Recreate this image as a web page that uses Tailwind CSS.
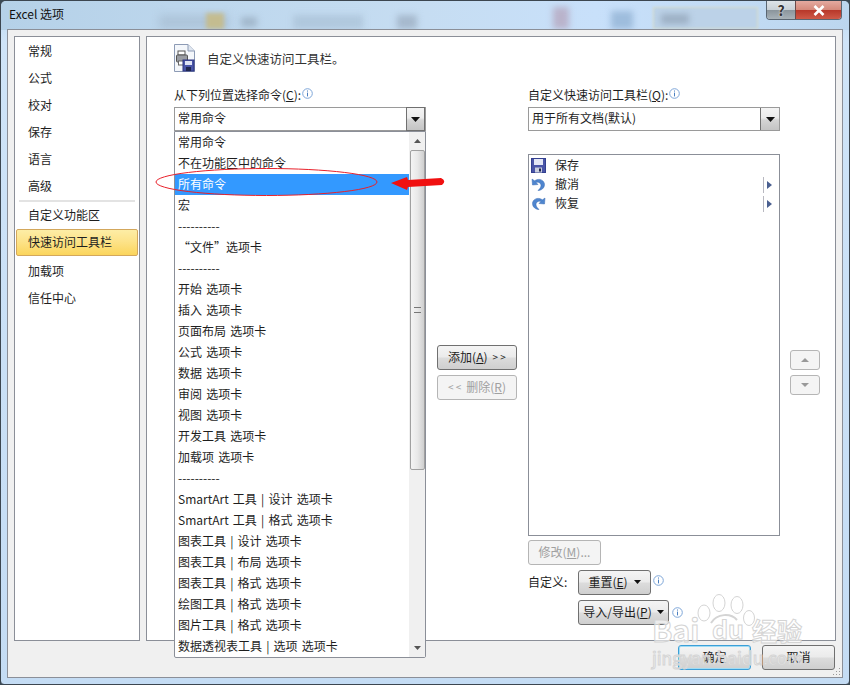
<!doctype html>
<html>

<head>
  <meta charset="UTF-8">
  <script src="https://cdn.jsdelivr.net/npm/@tailwindcss/browser@4"></script>
</head>

<body class="bg-[#3b4a55]">
  <div class="relative w-[850px] h-[685px] overflow-hidden rounded-t-[6px] rounded-b-[4px] border border-[#3c4650] bg-[linear-gradient(180deg,#bcd8f0_0%,#cfe4f8_6%,#c4dcf4_100%)] font-['Noto_Sans_CJK_SC',sans-serif] text-[12px] text-[#1e1e1e]">

    <!-- blurred window behind the glass -->
    <div class="absolute left-0 top-0 w-[850px] h-[29px] bg-[linear-gradient(90deg,#b5d1e8_0%,#c6ddf2_50%,#c8e0fa_70%,#bcd6ee_100%)]"></div>
    <div class="absolute left-[158px] top-[14px] w-[70px] h-[14px] bg-[#9fb4c8]/50 blur-[4px]"></div>
    <div class="absolute left-[205px] top-[12px] w-[18px] h-[16px] bg-[#c4bc90] blur-[2px]"></div>
    <div class="absolute left-[240px] top-[16px] w-[16px] h-[10px] bg-[#95aabd]/70 blur-[3px]"></div>
    <div class="absolute left-[292px] top-[14px] w-[70px] h-[14px] bg-[#a5bcd2]/60 blur-[3px]"></div>
    <div class="absolute left-[396px] top-[14px] w-[20px] h-[14px] bg-[#98aabd]/70 blur-[3px]"></div>
    <div class="absolute left-[552px] top-[6px] w-[16px] h-[22px] bg-[#b4a0b8]/70 blur-[3px]"></div>
    <div class="absolute left-[610px] top-[10px] w-[22px] h-[18px] bg-[#93b4d6]/80 blur-[3px]"></div>
    <div class="absolute left-[652px] top-[6px] w-[105px] h-[22px] border border-[#d8dcc4] bg-[#bcd2e8] blur-[1px]"></div>
    <div class="absolute left-[660px] top-[13px] w-[28px] h-[10px] bg-[#95a8bc]/80 blur-[3px]"></div>

    <!-- title bar -->
    <div class="relative flex h-[28px] items-start">
      <div class="pl-[8px] pt-[4px] text-[12px] leading-[18px] text-[#111]">Excel 选项</div>
      <div class="ml-auto mr-[7px] flex h-[19px] overflow-hidden rounded-b-[4px] border border-t-0 border-[#5a6672]">
        <div class="flex w-[28px] items-center justify-center bg-[linear-gradient(180deg,#dde3e8_0%,#c8d0d6_50%,#8b959c_52%,#a8b2b8_100%)] text-[14px] font-bold leading-none text-[#333] [text-shadow:0_0_2px_#fff]">?</div>
        <div class="flex w-[46px] items-center justify-center border-l border-[#6a4a4a] bg-[linear-gradient(180deg,#e4aaa0_0%,#d58a7c_48%,#b8382a_52%,#cf5a48_100%)]">
          <svg width="12" height="11" viewBox="0 0 12 11"><path d="M1.5 1 L10.5 10 M10.5 1 L1.5 10" stroke="#fff" stroke-width="2.6" /></svg>
        </div>
      </div>
    </div>

    <!-- dialog body -->
    <div class="relative ml-[6px] h-[649px] w-[836px] border border-[#8b8f98] bg-[#f0f0f0] pl-[6px] pt-[6px]">
      <div class="flex gap-[6px]">

        <!-- sidebar -->
        <div class="h-[605px] w-[126px] border border-[#8b8f98] bg-white pl-[1px] pt-[1px]">
          <div class="h-[27px] pl-[12px] leading-[25px]">常规</div>
          <div class="h-[27px] pl-[12px] leading-[25px]">公式</div>
          <div class="h-[27px] pl-[12px] leading-[25px]">校对</div>
          <div class="h-[27px] pl-[12px] leading-[25px]">保存</div>
          <div class="h-[27px] pl-[12px] leading-[25px]">语言</div>
          <div class="h-[27px] pl-[12px] leading-[25px]">高级</div>
          <div class="ml-[3px] mr-[4px] h-[2px] bg-[#e3e3e3]"></div>
          <div class="h-[27px] pl-[12px] leading-[25px]">自定义功能区</div>
          <div class="mb-[2px] h-[27px] w-[122px] rounded-[2px] border border-[#d3a75c] bg-[linear-gradient(180deg,#fdeda6_0%,#fde38a_45%,#fbd55c_100%)] pl-[11px] leading-[23px]">快速访问工具栏</div>
          <div class="h-[27px] pl-[12px] leading-[25px]">加载项</div>
          <div class="h-[27px] pl-[12px] leading-[25px]">信任中心</div>
        </div>

        <!-- main panel -->
        <div class="h-[605px] w-[690px] border border-[#8b8f98] bg-white">
          <div class="ml-[26px] mt-[6px] flex h-[30px] items-center gap-[11px]">
            <svg width="23" height="30" viewBox="0 0 23 30">
              <path d="M1.5 1.5 H15 L21.5 8 V28.5 H1.5 Z" fill="#f4f7fb" stroke="#8d9bb5" />
              <path d="M15 1.5 V8 H21.5" fill="#dfe6f0" stroke="#8d9bb5" />
              <rect x="5" y="8" width="7" height="4" fill="#fff" stroke="#555" />
              <rect x="3.500" y="12" width="11" height="7" rx="1" fill="#9a9da3" stroke="#555" />
              <rect x="5.500" y="18" width="6" height="4" fill="#fff" stroke="#666" />
              <rect x="10" y="17" width="11" height="11" fill="#4a55a8" stroke="#2d3580" />
              <rect x="12" y="18" width="7" height="4" fill="#dfe3f5" />
              <rect x="13" y="24" width="5" height="4" fill="#20264f" />
            </svg>
            <span class="pt-[3px] text-[12.5px] text-[#333]">自定义快速访问工具栏。</span>
          </div>

          <div class="ml-[27px] mt-[14px] flex">

            <!-- left column -->
            <div class="w-[252px]">
              <div class="flex h-[20px] items-start leading-[15px]">从下列位置选择命令(<span class="underline">C</span>):
                <svg class="ml-[1px] mt-[1px]" width="11" height="11" viewBox="0 0 11 11">
                  <circle cx="5.500" cy="5.500" r="4.800" fill="#fff" stroke="#7ea6d8" />
                  <path d="M5.500 2.500 V3.600 M5.500 4.600 V8.400" stroke="#4a7fc0" />
                </svg>
              </div>
              <div class="relative flex h-[24px] w-[252px] items-center justify-between border border-[#9a9a9a] bg-white pl-[3px]">
                <span class="pb-[2px]">常用命令</span>
                <div class="flex h-[24px] w-[19px] items-center justify-center border border-[#707070] bg-[linear-gradient(180deg,#f4f4f4_0%,#ebebeb_45%,#d4d4d4_55%,#c4c4c4_100%)]">
                  <svg width="9" height="5" viewBox="0 0 9 5"><path d="M0 0 H9 L4.500 5 Z" fill="#111" /></svg>
                </div>

                <!-- opened dropdown list -->
                <div class="absolute left-[-1px] top-[23px] z-10 flex h-[527px] w-[252px] rounded-b-[2px] border border-[#8b8f98] bg-white">
                  <div class="w-[235px] leading-[19px] [word-spacing:1.5px] [&>div]:pb-[2px]">
                    <div class="pl-[3px]">常用命令</div>
                    <div class="pl-[3px]">不在功能区中的命令</div>
                    <div class="bg-[#3399ff] pl-[3px] text-white">所有命令</div>
                    <div class="pl-[3px]">宏</div>
                    <div class="pl-[3px]">----------</div>
                    <div class="pl-[3px]">“文件”选项卡</div>
                    <div class="pl-[3px]">----------</div>
                    <div class="pl-[3px]">开始 选项卡</div>
                    <div class="pl-[3px]">插入 选项卡</div>
                    <div class="pl-[3px]">页面布局 选项卡</div>
                    <div class="pl-[3px]">公式 选项卡</div>
                    <div class="pl-[3px]">数据 选项卡</div>
                    <div class="pl-[3px]">审阅 选项卡</div>
                    <div class="pl-[3px]">视图 选项卡</div>
                    <div class="pl-[3px]">开发工具 选项卡</div>
                    <div class="pl-[3px]">加载项 选项卡</div>
                    <div class="pl-[3px]">----------</div>
                    <div class="pl-[3px]">SmartArt 工具 | 设计 选项卡</div>
                    <div class="pl-[3px]">SmartArt 工具 | 格式 选项卡</div>
                    <div class="pl-[3px]">图表工具 | 设计 选项卡</div>
                    <div class="pl-[3px]">图表工具 | 布局 选项卡</div>
                    <div class="pl-[3px]">图表工具 | 格式 选项卡</div>
                    <div class="pl-[3px]">绘图工具 | 格式 选项卡</div>
                    <div class="pl-[3px]">图片工具 | 格式 选项卡</div>
                    <div class="pl-[3px]">数据透视表工具 | 选项 选项卡</div>
                  </div>
                  <!-- scrollbar -->
                  <div class="flex w-[16px] flex-col items-center bg-[#f0f0f0]">
                    <div class="flex h-[18px] items-center justify-center">
                      <svg width="7" height="4" viewBox="0 0 7 4"><path d="M0 4 H7 L3.500 0 Z" fill="#555" /></svg>
                    </div>
                    <div class="flex h-[320px] w-[15px] items-center justify-center rounded-[2px] border border-[#a0a0a0] bg-[linear-gradient(90deg,#f4f4f4_0%,#e8e8e8_50%,#cfcfcf_100%)]">
                      <div class="h-[6px] w-[7px] border-y border-[#777] bg-[linear-gradient(180deg,transparent_40%,#777_40%,#777_60%,transparent_60%)]"></div>
                    </div>
                    <div class="mt-auto flex h-[18px] items-center justify-center">
                      <svg width="7" height="4" viewBox="0 0 7 4"><path d="M0 0 H7 L3.500 4 Z" fill="#555" /></svg>
                    </div>
                  </div>
                </div>
              </div>
            </div>

            <!-- add / remove buttons -->
            <div class="w-[102px] pl-[11px] pt-[258px]">
              <div class="flex h-[25px] w-[80px] items-center justify-center gap-[5px] rounded-[3px] border border-[#707070] bg-[linear-gradient(180deg,#f4f4f4_0%,#ebebeb_48%,#dcdcdc_52%,#cfcfcf_100%)] pb-[2px]"><span>添加(<span class="underline">A</span>)</span><span class="text-[10px]">&gt; &gt;</span></div>
              <div class="mt-[5px] flex h-[25px] w-[80px] items-center justify-center gap-[5px] rounded-[3px] border border-[#b5b5b5] bg-[#f4f4f4] pb-[2px] text-[#a0a0a0]"><span class="text-[10px]">&lt; &lt;</span><span>删除(<span class="underline">R</span>)</span></div>
            </div>

            <!-- right column -->
            <div class="w-[252px]">
              <div class="flex h-[20px] items-start leading-[15px]">自定义快速访问工具栏(<span class="underline">Q</span>):
                <svg class="ml-[1px] mt-[1px]" width="11" height="11" viewBox="0 0 11 11">
                  <circle cx="5.500" cy="5.500" r="4.800" fill="#fff" stroke="#7ea6d8" />
                  <path d="M5.500 2.500 V3.600 M5.500 4.600 V8.400" stroke="#4a7fc0" />
                </svg>
              </div>
              <div class="flex h-[24px] items-center justify-between border border-[#9a9a9a] bg-white pl-[3px]">
                <span class="pb-[2px]">用于所有文档(默认)</span>
                <div class="flex h-[22px] w-[19px] items-center justify-center border-l border-[#707070] bg-[linear-gradient(180deg,#f4f4f4_0%,#ebebeb_45%,#d4d4d4_55%,#c4c4c4_100%)]">
                  <svg width="9" height="5" viewBox="0 0 9 5"><path d="M0 0 H9 L4.500 5 Z" fill="#111" /></svg>
                </div>
              </div>

              <div class="mt-[23px] h-[382px] border border-[#8b8f98] bg-white pt-[1px] leading-[19px]">
                <div class="flex h-[19px] items-center">
                  <svg class="ml-[2px]" width="15" height="15" viewBox="0 0 15 15">
                    <rect x=".5" y=".5" width="14" height="14" fill="#4a55a8" stroke="#33408f" />
                    <rect x="3" y="1" width="9" height="6" fill="#e4e7f6" />
                    <rect x="4" y="9.500" width="7" height="5" fill="#c9cede" />
                    <rect x="8" y="10.500" width="2" height="3" fill="#20264f" />
                  </svg>
                  <span class="ml-[9px] pb-[2px]">保存</span>
                </div>
                <div class="flex h-[19px] items-center">
                  <svg class="ml-[2px]" width="15" height="15" viewBox="0 0 15 15">
                    <path d="M1 2 L1.500 8 L7 7.500 L5 5.500 C7.500 4.500 10 6 10 8.500 C10 10.500 8.500 12 7 13.500 C10.500 13.500 13.500 11 13.500 7.500 C13.500 3.500 8.500 0.500 3.500 3.800 Z" fill="#4f86cf" stroke="#3b6db5" stroke-width=".5" />
                  </svg>
                  <span class="ml-[9px] pb-[2px]">撤消</span>
                  <div class="ml-auto mr-[7px] flex h-[16px] items-center border-l border-[#b8b8c0] pl-[3px]">
                    <svg width="5" height="8" viewBox="0 0 5 8"><path d="M0 0 L5 4 L0 8 Z" fill="#4a5f90" /></svg>
                  </div>
                </div>
                <div class="flex h-[19px] items-center">
                  <svg class="ml-[2px]" width="15" height="15" viewBox="0 0 15 15">
                    <path d="M14 2 L13.500 8 L8 7.500 L10 5.500 C7.500 4.500 5 6 5 8.500 C5 10.500 6.500 12 8 13.500 C4.500 13.500 1.500 11 1.500 7.500 C1.500 3.500 6.500 0.500 11.500 3.800 Z" fill="#4f86cf" stroke="#3b6db5" stroke-width=".5" />
                  </svg>
                  <span class="ml-[9px] pb-[2px]">恢复</span>
                  <div class="ml-auto mr-[7px] flex h-[16px] items-center border-l border-[#b8b8c0] pl-[3px]">
                    <svg width="5" height="8" viewBox="0 0 5 8"><path d="M0 0 L5 4 L0 8 Z" fill="#4a5f90" /></svg>
                  </div>
                </div>
              </div>

              <div class="mt-[4px] flex h-[25px] w-[73px] items-center justify-center rounded-[3px] border border-[#b5b5b5] bg-[#f4f4f4] pb-[2px] text-[#a0a0a0]"><span>修改(<span class="underline">M</span>)...</span></div>

              <div class="mt-[5px] flex h-[25px] items-center">
                <span class="w-[50px] pb-[2px]">自定义:</span>
                <div class="flex h-[25px] w-[73px] items-center justify-center gap-[6px] rounded-[3px] border border-[#707070] bg-[linear-gradient(180deg,#f4f4f4_0%,#ebebeb_48%,#dcdcdc_52%,#cfcfcf_100%)] pb-[2px]">
                  <span>重置(<span class="underline">E</span>)</span>
                  <svg width="7" height="4" viewBox="0 0 7 4"><path d="M0 0 H7 L3.500 4 Z" fill="#111" /></svg>
                </div>
                <svg class="mb-[5px] ml-[2px]" width="11" height="11" viewBox="0 0 11 11">
                  <circle cx="5.500" cy="5.500" r="4.800" fill="#fff" stroke="#7ea6d8" />
                  <path d="M5.500 2.500 V3.600 M5.500 4.600 V8.400" stroke="#4a7fc0" />
                </svg>
              </div>

              <div class="mt-[5px] flex h-[25px] items-center pl-[50px]">
                <div class="flex h-[25px] w-[91px] shrink-0 items-center justify-center gap-[5px] rounded-[3px] border border-[#707070] bg-[linear-gradient(180deg,#f4f4f4_0%,#ebebeb_48%,#dcdcdc_52%,#cfcfcf_100%)] pb-[2px]">
                  <span class="whitespace-nowrap">导入/导出(<span class="underline">P</span>)</span>
                  <svg width="7" height="4" viewBox="0 0 7 4"><path d="M0 0 H7 L3.500 4 Z" fill="#111" /></svg>
                </div>
                <svg class="ml-[3px] shrink-0" width="11" height="11" viewBox="0 0 11 11">
                  <circle cx="5.500" cy="5.500" r="4.800" fill="#fff" stroke="#7ea6d8" />
                  <path d="M5.500 2.500 V3.600 M5.500 4.600 V8.400" stroke="#4a7fc0" />
                </svg>
              </div>
            </div>

            <!-- move up / down -->
            <div class="ml-[10px] w-[30px] pt-[263px]">
              <div class="flex h-[20px] w-[30px] items-center justify-center rounded-[3px] border border-[#b5b5b5] bg-[#f4f4f4]">
                <svg width="8" height="4" viewBox="0 0 8 4"><path d="M0 4 H8 L4 0 Z" fill="#999" /></svg>
              </div>
              <div class="mt-[5px] flex h-[20px] w-[30px] items-center justify-center rounded-[3px] border border-[#b5b5b5] bg-[#f4f4f4]">
                <svg width="8" height="4" viewBox="0 0 8 4"><path d="M0 0 H8 L4 4 Z" fill="#999" /></svg>
              </div>
            </div>
          </div>
        </div>
      </div>

      <!-- footer buttons -->
      <div class="mt-[4px] flex justify-end gap-[11px] pr-[7px]">
        <div class="flex h-[25px] w-[73px] items-center justify-center rounded-[3px] border border-[#3c9fd8] bg-[linear-gradient(180deg,#f4f4f4_0%,#ebebeb_48%,#dcdcdc_52%,#cfcfcf_100%)] pb-[2px] shadow-[inset_0_0_0_1px_#9fdcf5]">确定</div>
        <div class="flex h-[25px] w-[73px] items-center justify-center rounded-[3px] border border-[#707070] bg-[linear-gradient(180deg,#f4f4f4_0%,#ebebeb_48%,#dcdcdc_52%,#cfcfcf_100%)] pb-[2px]">取消</div>
      </div>

      <!-- resize grip -->
      <svg class="absolute bottom-[1px] right-[1px]" width="9" height="9" viewBox="0 0 9 9">
        <path d="M7 1h1v1H7zM4 4h1v1H4zM7 4h1v1H7zM1 7h1v1H1zM4 7h1v1H4zM7 7h1v1H7z" fill="#9a9a9a" />
      </svg>
    </div>

    <!-- hand drawn red marks -->
    <svg class="absolute left-[-1px] top-[-1px] z-20" width="850" height="685" viewBox="0 0 850 685">
      <ellipse cx="266.500" cy="182" rx="110.500" ry="13.500" fill="none" stroke="#e8202a" stroke-width="1" />
      <path d="M391 183 L407 177 L408 180 L441 178 Q447 181 442 185 L408 187 L407 190 Z" fill="#f01010" />
    </svg>

    <!-- watermark -->
    <div class="absolute left-[651px] top-[612px] z-30 text-[30px] font-bold leading-[32px] text-white/60 [-webkit-text-stroke:1px_#d4d4d4]">Bai</div>
    <div class="absolute left-[711px] top-[611px] z-30 text-[25px] font-bold leading-[32px] text-white/60 [-webkit-text-stroke:1px_#d4d4d4]">du</div>
    <div class="absolute left-[751px] top-[614px] z-30 text-[25px] font-bold leading-[30px] text-white/60 [-webkit-text-stroke:1px_#d4d4d4]">经验</div>
    <div class="absolute left-[651px] top-[645px] z-30 text-[17.5px] leading-[24px] text-white/60 [-webkit-text-stroke:1px_#d4d4d4]">jingyan.baidu.com</div>
    <svg class="absolute left-[694px] top-[592px] z-30" width="62" height="52" viewBox="0 0 62 52">
      <g fill="#fff" fill-opacity=".6" stroke="#d4d4d4">
        <ellipse cx="9" cy="20" rx="6" ry="8" />
        <ellipse cx="24" cy="10" rx="6" ry="8.500" />
        <ellipse cx="42" cy="12" rx="6" ry="8.500" />
        <ellipse cx="54" cy="25" rx="5.500" ry="7.500" />
        <path d="M16 30 C22 20 36 20 42 27" fill="none" stroke-width="2" />
      </g>
    </svg>
  </div>
</body>

</html>
